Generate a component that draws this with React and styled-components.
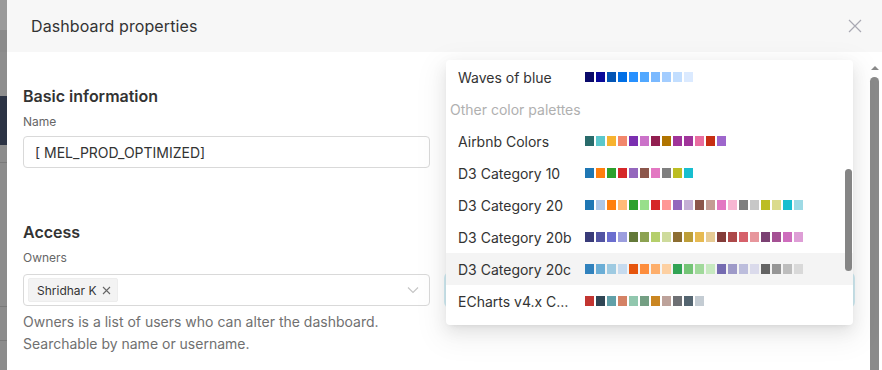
import React from 'react';
import styled, { createGlobalStyle } from 'styled-components';

const GlobalStyle = createGlobalStyle`
  html, body {
    margin: 0;
    padding: 0;
    background: #8c8c8c;
    font-family: Inter, "Noto Sans", "Liberation Sans", sans-serif;
  }
`;

const Page = styled.div`
  display: flex;
  width: 882px;
  height: 370px;
  overflow: hidden;
`;

const Backdrop = styled.div`
  width: 7px;
  flex: none;
  display: flex;
  flex-direction: column;
  overflow: hidden;
`;

const BackBand = styled.div`
  height: ${p => p.h}px;
  flex: none;
  background: ${p => p.bg};
  border-bottom: ${p => (p.line ? '1px solid #7a7a7a' : 'none')};
  color: #000;
  font-size: ${p => p.fs || 14}px;
  font-weight: 700;
  line-height: ${p => p.h}px;
  white-space: nowrap;
`;

const Modal = styled.div`
  flex: 1;
  display: flex;
  flex-direction: column;
  background: #fff;
  min-width: 0;
`;

const Header = styled.div`
  height: 52px;
  flex: none;
  display: flex;
  align-items: center;
  justify-content: space-between;
  padding: 0 19px 0 24px;
  background: #f7f7f7;
`;

const Title = styled.div`
  font-size: 16px;
  color: #333;
  letter-spacing: 0.1px;
`;

const CloseButton = styled.button`
  border: none;
  background: none;
  padding: 0;
  width: 16px;
  height: 16px;
  display: flex;
  align-items: center;
  justify-content: center;
  cursor: pointer;
`;

const Body = styled.div`
  flex: 1;
  display: flex;
  min-height: 0;
`;

const Content = styled.div`
  position: relative;
  flex: 1;
  display: grid;
  grid-template-columns: 407px 407px;
  column-gap: 16px;
  padding: 0 16px;
  align-content: start;
`;

const Column = styled.div`
  display: flex;
  flex-direction: column;
`;

const SectionTitle = styled.div`
  font-size: 16px;
  font-weight: 600;
  color: #333;
  line-height: 24px;
  margin-top: ${p => p.mt}px;
`;

const Label = styled.div`
  font-size: 12px;
  color: #666;
  line-height: 16px;
  margin-top: 6px;
  margin-bottom: ${p => p.mb || 6}px;
`;

const Input = styled.div`
  height: 32px;
  box-sizing: border-box;
  border: 1px solid ${p => (p.focused ? '#a9d6e4' : '#d9d9d9')};
  box-shadow: ${p => (p.focused ? '0 0 0 2px rgba(32,167,201,0.2)' : 'none')};
  border-radius: 4px;
  display: flex;
  align-items: center;
  padding: 0 10px 0 ${p => p.pl || 11}px;
  font-size: 14px;
  color: #333;
`;

const Tag = styled.span`
  display: inline-flex;
  align-items: center;
  gap: 5px;
  height: 24px;
  box-sizing: border-box;
  padding: 0 6px 0 8px;
  background: #f3f3f3;
  border: 1px solid #ededed;
  border-radius: 2px;
  font-size: 12px;
  color: #333;
`;

const Grow = styled.div`
  flex: 1;
`;

const Help = styled.div`
  margin-top: 5px;
  font-size: 14px;
  line-height: 22px;
  color: #707070;
`;

const Dropdown = styled.div`
  position: absolute;
  top: 8px;
  left: 439px;
  width: 407px;
  height: 265px;
  box-sizing: border-box;
  padding: 1px 0 8px;
  background: #fff;
  border-radius: 4px;
  box-shadow: 0 3px 6px -4px rgba(0,0,0,0.12), 0 6px 16px 0 rgba(0,0,0,0.08), 0 9px 28px 8px rgba(0,0,0,0.05);
  overflow: hidden;
`;

const Option = styled.div`
  height: 32px;
  display: flex;
  align-items: center;
  padding-left: 12px;
  background: ${p => (p.active ? '#f4f4f4' : 'transparent')};
`;

const OptionName = styled.span`
  width: 120px;
  flex: none;
  margin-right: 7px;
  font-size: 14px;
  color: #333;
  white-space: nowrap;
  overflow: hidden;
  text-overflow: ellipsis;
`;

const EllipsisName = styled(OptionName)`
  width: 112px;
  margin-right: 15px;
`;

const GroupLabel = styled.div`
  height: 32px;
  display: flex;
  align-items: center;
  padding-left: 4px;
  font-size: 14px;
  color: #b0b0b0;
`;

const Swatches = styled.div`
  display: flex;
  gap: 2px;
`;

const Swatch = styled.span`
  width: 9px;
  height: 10px;
  background: ${p => p.c};
`;

const InnerThumb = styled.div`
  position: absolute;
  right: 1px;
  top: 109px;
  width: 7px;
  height: 102px;
  border-radius: 4px;
  background: #858585;
`;

const ScrollTrack = styled.div`
  width: 13px;
  flex: none;
  display: flex;
  flex-direction: column;
  align-items: center;
  padding-top: 14px;
  padding-right: 2px;
  box-sizing: border-box;
`;

const ScrollArrow = styled.div`
  width: 0;
  height: 0;
  border-left: 4px solid transparent;
  border-right: 4px solid transparent;
  border-bottom: 4px solid #8a8a8a;
  margin-bottom: 7px;
`;

const ScrollThumb = styled.div`
  width: 9px;
  flex: 1;
  border-radius: 5px 5px 0 0;
  background: #8a8a8a;
`;

const palettes = [
  { name: 'Waves of blue', colors: ['#0a0a6a', '#0a0a9a', '#0455b4', '#006fe6', '#2891ff', '#52a8ff', '#7ab9ff', '#a3cdff', '#c2deff', '#dbeaff'] },
  { group: 'Other color palettes' },
  { name: 'Airbnb Colors', colors: ['#296b6b', '#5bc8cc', '#f7b32f', '#f2876c', '#7b2fb0', '#cb72c9', '#921f50', '#b07400', '#a0349a', '#a0349a', '#e96da0', '#c72e12', '#9e66cc'] },
  { name: 'D3 Category 10', colors: ['#1f77b4', '#ff7f0e', '#2ca02c', '#d62728', '#9467bd', '#8c564b', '#e377c2', '#7f7f7f', '#bcbd22', '#17becf'] },
  { name: 'D3 Category 20', colors: ['#1f77b4', '#aec7e8', '#ff7f0e', '#ffbb78', '#2ca02c', '#98df8a', '#d62728', '#ff9896', '#9467bd', '#c5b0d5', '#8c564b', '#c49c94', '#e377c2', '#f7b6d2', '#7f7f7f', '#c7c7c7', '#bcbd22', '#dbdb8d', '#17becf', '#9edae5'] },
  { name: 'D3 Category 20b', colors: ['#393b79', '#5254a3', '#6b6ecf', '#9c9ede', '#637939', '#8ca252', '#b5cf6b', '#cedb9c', '#8c6d31', '#bd9e39', '#e7ba52', '#e7cb94', '#843c39', '#ad494a', '#d6616b', '#e7969c', '#7b4173', '#a55194', '#ce6dbd', '#de9ed6'] },
  { name: 'D3 Category 20c', active: true, colors: ['#3182bd', '#6baed6', '#9ecae1', '#c6dbef', '#e6550d', '#fd8d3c', '#fdae6b', '#fdd0a2', '#31a354', '#74c476', '#a1d99b', '#c7e9c0', '#756bb1', '#9e9ac8', '#bcbddc', '#dadaeb', '#636363', '#969696', '#bdbdbd', '#d9d9d9'] },
  { name: 'ECharts v4.x Colors', short: true, colors: ['#c23531', '#2f4554', '#61a0a8', '#d48265', '#91c7ae', '#749f83', '#ca8622', '#bda29a', '#6e7074', '#546570', '#c4ccd3'] },
];

const CloseIcon = () => (
  <svg width="14" height="14" viewBox="0 0 14 14">
    <path d="M1 1 L13 13 M13 1 L1 13" stroke="#a9a9b3" strokeWidth="1.2" fill="none" />
  </svg>
);

const TagClose = () => (
  <svg width="9" height="9" viewBox="0 0 9 9">
    <path d="M1 1 L8 8 M8 1 L1 8" stroke="#666" strokeWidth="1.1" fill="none" />
  </svg>
);

const Chevron = () => (
  <svg width="12" height="8" viewBox="0 0 12 8">
    <path d="M1 1.5 L6 6.5 L11 1.5" stroke="#c4c4c4" strokeWidth="1.1" fill="none" />
  </svg>
);

export default function App() {
  return (
    <Page>
      <GlobalStyle />
      <Backdrop>
        <BackBand h={30} bg="#9a9a9a" />
        <BackBand h={22} bg="#8b8b8b" />
        <BackBand h={44} bg="#8e8e8e" />
        <BackBand h={49} bg="#2c3344" />
        <BackBand h={17} bg="#8c8c8c" line />
        <BackBand h={143} bg="#8c8c8c" line />
        <BackBand h={33} bg="#8c8c8c" line />
        <BackBand h={32} bg="#8c8c8c" />
      </Backdrop>
      <Modal>
        <Header>
          <Title>Dashboard properties</Title>
          <CloseButton><CloseIcon /></CloseButton>
        </Header>
        <Body>
          <Content>
            <Column>
              <SectionTitle mt={32}>Basic information</SectionTitle>
              <Label>Name</Label>
              <Input>[ MEL_PROD_OPTIMIZED]</Input>
              <SectionTitle mt={52}>Access</SectionTitle>
              <Label mb={8}>Owners</Label>
              <Input pl={4}>
                <Tag>Shridhar K <TagClose /></Tag>
                <Grow />
                <Chevron />
              </Input>
              <Help>
                Owners is a list of users who can alter the dashboard.<br />
                Searchable by name or username.
              </Help>
            </Column>
            <Column>
              <SectionTitle mt={32}>&nbsp;</SectionTitle>
              <Label>&nbsp;</Label>
              <Input />
              <SectionTitle mt={52}>&nbsp;</SectionTitle>
              <Label mb={8}>&nbsp;</Label>
              <Input focused />
            </Column>
            <Dropdown>
              {palettes.map((p, i) =>
                p.group ? (
                  <GroupLabel key={i}>{p.group}</GroupLabel>
                ) : (
                  <Option key={i} active={p.active}>
                    {p.short
                      ? <EllipsisName>{p.name}</EllipsisName>
                      : <OptionName>{p.name}</OptionName>}
                    <Swatches>
                      {p.colors.map((c, j) => <Swatch key={j} c={c} />)}
                    </Swatches>
                  </Option>
                )
              )}
              <InnerThumb />
            </Dropdown>
          </Content>
          <ScrollTrack>
            <ScrollArrow />
            <ScrollThumb />
          </ScrollTrack>
        </Body>
      </Modal>
    </Page>
  );
}
